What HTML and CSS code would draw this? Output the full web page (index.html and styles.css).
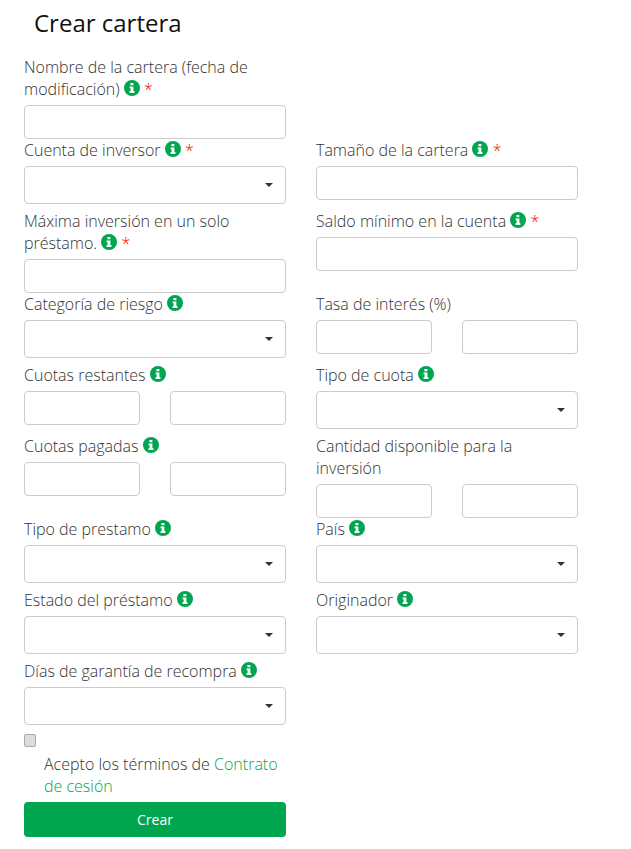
FILE: index.html
```html
<!DOCTYPE html>
<html lang="es">
  <head>
    <meta charset="utf-8" />
    <title>Crear cartera</title>
    <link rel="stylesheet" href="styles.css">
  </head>
  <body>
    <svg class="defs" width="0" height="0" aria-hidden="true">
      <symbol id="info" viewBox="0 0 16 16">
        <circle cx="8" cy="8" r="8" fill="#00a64f" />
        <path fill="#fff" d="M6.4 3h3v2.2h-3zM5.6 6.4h3.8v4.6h1v1.9H5.6V11h1V8.3h-1z" />
      </symbol>
    </svg>
    <h1 class="title">Crear cartera</h1>
    <form class="form">
      <div class="row">
        <div class="cell">
          <label>Nombre de la cartera (fecha de modificación) <svg class="info"><use href="#info" /></svg> <span class="req">*</span></label>
          <input type="text" />
        </div>
      </div>

      <div class="row">
        <div class="cell">
          <label>Cuenta de inversor <svg class="info"><use href="#info" /></svg> <span class="req">*</span></label>
          <div class="select"></div>
        </div>
        <div class="cell">
          <label>Tamaño de la cartera <svg class="info"><use href="#info" /></svg> <span class="req">*</span></label>
          <input type="text" />
        </div>
      </div>

      <div class="row">
        <div class="cell">
          <label>Máxima inversión en un solo préstamo. <svg class="info"><use href="#info" /></svg> <span class="req">*</span></label>
          <input type="text" />
        </div>
        <div class="cell">
          <label>Saldo mínimo en la cuenta <svg class="info"><use href="#info" /></svg> <span class="req">*</span></label>
          <input type="text" />
        </div>
      </div>

      <div class="row">
        <div class="cell">
          <label>Categoría de riesgo <svg class="info"><use href="#info" /></svg></label>
          <div class="select"></div>
        </div>
        <div class="cell">
          <label>Tasa de interés (%)</label>
          <div class="range"><input type="text" /><input type="text" /></div>
        </div>
      </div>

      <div class="row">
        <div class="cell">
          <label>Cuotas restantes <svg class="info"><use href="#info" /></svg></label>
          <div class="range"><input type="text" /><input type="text" /></div>
        </div>
        <div class="cell">
          <label>Tipo de cuota <svg class="info"><use href="#info" /></svg></label>
          <div class="select"></div>
        </div>
      </div>

      <div class="row">
        <div class="cell">
          <label>Cuotas pagadas <svg class="info"><use href="#info" /></svg></label>
          <div class="range"><input type="text" /><input type="text" /></div>
        </div>
        <div class="cell">
          <label>Cantidad disponible para la inversión</label>
          <div class="range"><input type="text" /><input type="text" /></div>
        </div>
      </div>

      <div class="row">
        <div class="cell">
          <label>Tipo de prestamo <svg class="info"><use href="#info" /></svg></label>
          <div class="select"></div>
        </div>
        <div class="cell">
          <label>País <svg class="info"><use href="#info" /></svg></label>
          <div class="select"></div>
        </div>
      </div>

      <div class="row">
        <div class="cell">
          <label>Estado del préstamo <svg class="info"><use href="#info" /></svg></label>
          <div class="select"></div>
        </div>
        <div class="cell">
          <label>Originador <svg class="info"><use href="#info" /></svg></label>
          <div class="select"></div>
        </div>
      </div>

      <div class="row">
        <div class="cell">
          <label>Días de garantía de recompra <svg class="info"><use href="#info" /></svg></label>
          <div class="select"></div>
        </div>
      </div>

      <div class="row">
        <div class="cell">
          <div class="check-box"></div>
          <p class="terms">Acepto los términos de <a href="#">Contrato de cesión</a></p>
          <button type="button" class="submit">Crear</button>
        </div>
      </div>
    </form>
  </body>
</html>
```

FILE: styles.css
```css
html {
  font-family: "Open Sans", sans-serif;
  font-size: 16px;
  line-height: 22px;
}

body {
  margin: 0;
  background-color: white;
  color: #333;
}

.defs {
  display: block;
  height: 0;
}

.title {
  margin: 0;
  padding: 8px 0 0 34px;
  height: 48px;
  box-sizing: border-box;
  font-size: 24px;
  line-height: 30px;
  font-weight: 400;
  color: #111;
}

.form {
  padding: 8px 0 0 24px;
}

.row {
  display: grid;
  grid-template-columns: 262px 262px;
  column-gap: 30px;
  align-items: start;
}

.cell label {
  display: block;
  margin-bottom: 5px;
  font-weight: 300;
}

.info {
  width: 16px;
  height: 16px;
  vertical-align: -1px;
}

.req {
  color: #f00;
}

input[type="text"] {
  display: block;
  box-sizing: border-box;
  width: 100%;
  height: 34px;
  padding: 6px 12px;
  border: 1px solid #ccc;
  border-radius: 4px;
  background-color: white;
}

.select {
  position: relative;
  box-sizing: border-box;
  height: 38px;
  margin-bottom: 6px;
  border: 1px solid #ccc;
  border-radius: 4px;
}

.select::after {
  content: "";
  position: absolute;
  right: 12px;
  top: 16px;
  border-style: solid;
  border-width: 4px 4px 0;
  border-color: #333 transparent transparent;
}

.range {
  display: grid;
  grid-template-columns: 116px 116px;
  column-gap: 30px;
}

.check-box {
  box-sizing: border-box;
  width: 12px;
  height: 13px;
  margin-top: 3px;
  border: 1px solid #aaa;
  border-radius: 2px;
  background-color: #ddd;
}

.terms {
  margin: 6px 0 5px 20px;
  font-weight: 300;
}

.terms a {
  color: #00a64f;
  text-decoration: none;
}

.submit {
  display: block;
  width: 100%;
  height: 35px;
  border: 0;
  border-radius: 4px;
  background-color: #00a64f;
  color: white;
  font-family: inherit;
  font-size: 14px;
}
```
